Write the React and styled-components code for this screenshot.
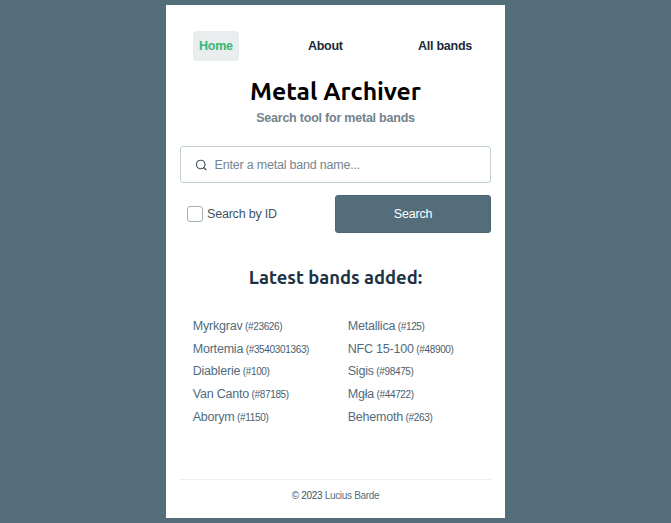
import React from "react";
import styled, { createGlobalStyle } from "styled-components";

const GlobalStyle = createGlobalStyle`
  * { box-sizing: border-box; }
  body {
    margin: 0;
    background: #536d7a;
    font-family: "Liberation Sans", Arial, sans-serif;
    font-size: 12.5px;
    letter-spacing: -0.2px;
    color: #415462;
  }
`;

const Page = styled.div`
  height: 523px;
  padding: 5px 0 5px 166px;
`;

const Panel = styled.main`
  width: 339px;
  height: 513px;
  padding: 26px 14px 0;
  background: #fff;
  display: flex;
  flex-direction: column;
`;

const Nav = styled.nav`
  display: flex;
  justify-content: space-between;
  padding: 0 13px;
`;

const NavLink = styled.a`
  height: 30px;
  line-height: 30px;
  padding: 0 6px;
  border-radius: 3px;
  font-weight: 700;
  letter-spacing: -0.25px;
  color: ${(p) => (p.$active ? "#35b77b" : "#1b2b38")};
  background: ${(p) => (p.$active ? "#e9edee" : "transparent")};
`;

const Title = styled.h1`
  margin: 15px 0 0;
  font: 600 24.7px/30px Ubuntu, "Noto Sans", sans-serif;
  letter-spacing: 0;
  color: #000;
  text-align: center;
  white-space: nowrap;
`;

const Subtitle = styled.p`
  margin: 4px 0 0;
  line-height: 16px;
  font-weight: 700;
  letter-spacing: -0.22px;
  color: #73828c;
  text-align: center;
`;

const SearchField = styled.div`
  display: flex;
  align-items: center;
  gap: 7.5px;
  margin: 20px 0 0;
  width: 311px;
  height: 37px;
  padding: 0 14px;
  border: 1px solid #c3d0d2;
  border-radius: 3px;
`;

const Input = styled.input`
  flex: 1;
  min-width: 0;
  border: 0;
  padding: 0;
  outline: 0;
  background: transparent;
  font: inherit;
  letter-spacing: inherit;
  height: 16px;
  &::placeholder { color: #748591; opacity: 1; }
`;

const Actions = styled.div`
  display: grid;
  grid-template-columns: 155.4px 155.2px;
  align-items: center;
  margin-top: 12px;
`;

const CheckLabel = styled.label`
  display: flex;
  align-items: center;
  gap: 4px;
  padding-left: 7px;
  line-height: 16px;
`;

const Checkbox = styled.input`
  appearance: none;
  margin: 0;
  width: 16px;
  height: 16px;
  border: 1px solid #a2afb7;
  border-radius: 3px;
  background: #fff;
`;

const SearchButton = styled.button`
  height: 38px;
  padding: 0 0 1px;
  border: 1px solid #4b6673;
  border-radius: 3px;
  background: #536d7a;
  color: #fff;
  font: inherit;
  letter-spacing: inherit;
`;

const Heading = styled.h2`
  margin: 32px 0 0;
  font: 600 18.4px/24px Ubuntu, "Noto Sans", sans-serif;
  letter-spacing: 0;
  color: #1d3343;
  text-align: center;
  white-space: nowrap;
`;

const Bands = styled.div`
  display: grid;
  grid-template-columns: 155px 155px;
  margin-top: 27px;
`;

const Column = styled.ul`
  list-style: none;
  margin: 0;
  padding: 0 0 0 12.7px;
`;

const Band = styled.li`
  height: 22.67px;
  line-height: 20px;
  color: #516c7c;
  white-space: nowrap;
`;

const BandId = styled.small`
  font-size: 10px;
  letter-spacing: -0.34px;
  margin-left: -0.8px;
  color: #4b606e;
`;

const Footer = styled.footer`
  width: 311px;
  margin-top: 50px;
  padding-top: 8px;
  border-top: 1px solid #edf0f2;
  font-size: 10px;
  letter-spacing: -0.32px;
  line-height: 16px;
  text-align: center;
`;

const Author = styled.a`
  color: #526f80;
`;

const columns = [
  [["Myrkgrav", 23626], ["Mortemia", 3540301363], ["Diablerie", 100], ["Van Canto", 87185], ["Aborym", 1150]],
  [["Metallica", 125], ["NFC 15-100", 48900], ["Sigis", 98475], ["Mgła", 44722], ["Behemoth", 263]],
];

const SearchIcon = () => (
  <svg width="12" height="12" viewBox="0 0 24 24" fill="none" stroke="#40515f" strokeWidth="2.3" strokeLinecap="round" strokeLinejoin="round">
    <circle cx="11.5" cy="11" r="8.5" />
    <path d="m22 21.5-4.5-4.5" />
  </svg>
);

export default function App() {
  return (
    <Page>
      <GlobalStyle />
      <Panel>
        <Nav>
          <NavLink $active>Home</NavLink>
          <NavLink>About</NavLink>
          <NavLink>All bands</NavLink>
        </Nav>
        <Title>Metal Archiver</Title>
        <Subtitle>Search tool for metal bands</Subtitle>
        <SearchField>
          <SearchIcon />
          <Input placeholder="Enter a metal band name..." />
        </SearchField>
        <Actions>
          <CheckLabel>
            <Checkbox type="checkbox" />
            Search by ID
          </CheckLabel>
          <SearchButton>Search</SearchButton>
        </Actions>
        <Heading>Latest bands added:</Heading>
        <Bands>
          {columns.map((bands, i) => (
            <Column key={i}>
              {bands.map(([name, id]) => (
                <Band key={id}>
                  {name} <BandId>(#{id})</BandId>
                </Band>
              ))}
            </Column>
          ))}
        </Bands>
        <Footer>
          © 2023 <Author>Lucius Barde</Author>
        </Footer>
      </Panel>
    </Page>
  );
}
